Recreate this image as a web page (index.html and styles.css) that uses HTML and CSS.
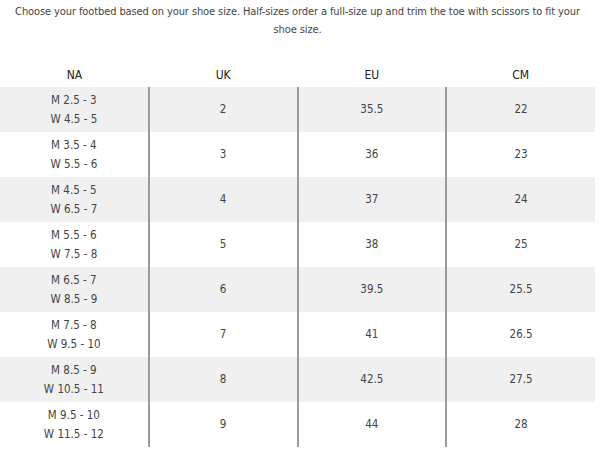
FILE: index.html
```html
<!DOCTYPE html>
<html>
<head>
<meta charset="utf-8">
<link rel="stylesheet" href="styles.css">
</head>
<body>
<div class="page">
  <p class="intro">Choose your footbed based on your shoe size. Half-sizes order a full-size up and trim the toe with scissors to fit your shoe size.</p>
  <table class="sizes">
    <thead>
      <tr><th>NA</th><th>UK</th><th>EU</th><th>CM</th></tr>
    </thead>
    <tbody>
      <tr><td>M 2.5 - 3<br>W 4.5 - 5</td><td>2</td><td>35.5</td><td>22</td></tr>
      <tr><td>M 3.5 - 4<br>W 5.5 - 6</td><td>3</td><td>36</td><td>23</td></tr>
      <tr><td>M 4.5 - 5<br>W 6.5 - 7</td><td>4</td><td>37</td><td>24</td></tr>
      <tr><td>M 5.5 - 6<br>W 7.5 - 8</td><td>5</td><td>38</td><td>25</td></tr>
      <tr><td>M 6.5 - 7<br>W 8.5 - 9</td><td>6</td><td>39.5</td><td>25.5</td></tr>
      <tr><td>M 7.5 - 8<br>W 9.5 - 10</td><td>7</td><td>41</td><td>26.5</td></tr>
      <tr><td>M 8.5 - 9<br>W 10.5 - 11</td><td>8</td><td>42.5</td><td>27.5</td></tr>
      <tr><td>M 9.5 - 10<br>W 11.5 - 12</td><td>9</td><td>44</td><td>28</td></tr>
    </tbody>
  </table>
</div>
</body>
</html>
```
FILE: styles.css
```css
html, body {
  margin: 0;
  padding: 0;
  background: #fff;
}
.page {
  width: 595px;
  font-family: "DejaVu Sans Condensed", "DejaVu Sans", sans-serif;
  color: #444;
}
.intro {
  margin: 3px 0 0;
  padding: 0 2px;
  font-size: 11px;
  line-height: 18px;
  letter-spacing: -0.1px;
  text-align: center;
  color: #444;
}
.sizes {
  width: 595px;
  margin-top: 24px;
  border-collapse: collapse;
  table-layout: fixed;
}
.sizes th {
  font-weight: normal;
  font-size: 12px;
  color: #222;
  height: 24px;
  text-align: center;
  padding: 0;
}
.sizes td {
  height: 45px;
  padding: 0;
  text-align: center;
  vertical-align: middle;
  font-size: 11.5px;
  line-height: 19px;
  color: #444;
}
.sizes tbody tr:nth-child(odd) {
  background: #f0f0f0;
}
.sizes td + td {
  border-left: 2px solid #9a9a9a;
}
```
